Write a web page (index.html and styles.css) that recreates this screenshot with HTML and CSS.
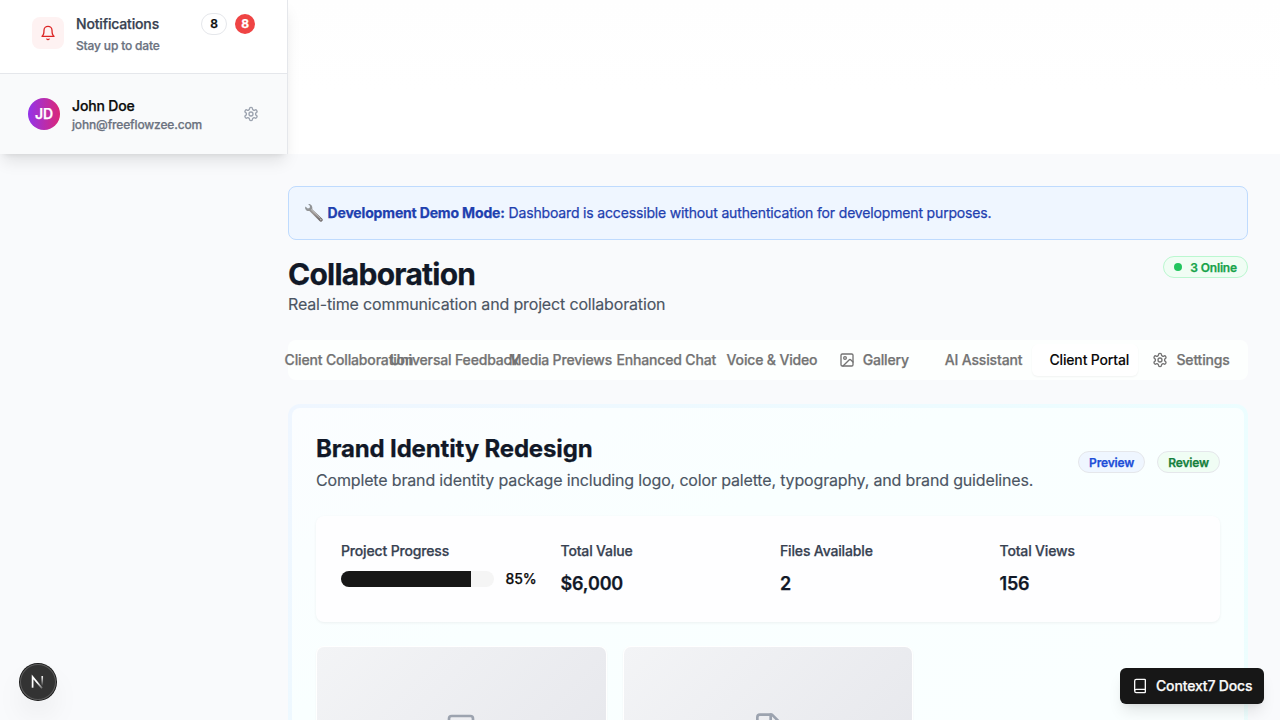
FILE: index.html
```html
<!DOCTYPE html>
<html lang="en">
<head>
<meta charset="utf-8">
<title>Collaboration</title>
<link rel="stylesheet" href="styles.css">
</head>
<body>
<div class="top">
  <aside class="sidebar">
    <div class="notice">
      <div class="bell"><svg class="i16" viewBox="0 0 24 24"><path d="M6 8a6 6 0 0 1 12 0c0 7 3 9 3 9H3s3-2 3-9"/><path d="M10.3 21a1.94 1.94 0 0 0 3.4 0"/></svg></div>
      <div class="notice-text">
        <div class="notice-title">Notifications</div>
        <div class="sub">Stay up to date</div>
      </div>
      <span class="badge count">8</span>
      <span class="alert">8</span>
    </div>
    <div class="user">
      <div class="avatar">JD</div>
      <div class="who">
        <div class="name">John Doe</div>
        <div class="mail">john@freeflowzee.com</div>
      </div>
      <svg class="i16 gear" viewBox="0 0 24 24"><path d="M12.22 2h-.44a2 2 0 0 0-2 2v.18a2 2 0 0 1-1 1.73l-.43.25a2 2 0 0 1-2 0l-.15-.08a2 2 0 0 0-2.73.73l-.22.38a2 2 0 0 0 .73 2.73l.15.1a2 2 0 0 1 1 1.72v.51a2 2 0 0 1-1 1.74l-.15.09a2 2 0 0 0-.73 2.73l.22.38a2 2 0 0 0 2.73.73l.15-.08a2 2 0 0 1 2 0l.43.25a2 2 0 0 1 1 1.73V20a2 2 0 0 0 2 2h.44a2 2 0 0 0 2-2v-.18a2 2 0 0 1 1-1.73l.43-.25a2 2 0 0 1 2 0l.15.08a2 2 0 0 0 2.73-.73l.22-.39a2 2 0 0 0-.73-2.73l-.15-.08a2 2 0 0 1-1-1.74v-.5a2 2 0 0 1 1-1.74l.15-.09a2 2 0 0 0 .73-2.73l-.22-.38a2 2 0 0 0-2.73-.73l-.15.08a2 2 0 0 1-2 0l-.43-.25a2 2 0 0 1-1-1.73V4a2 2 0 0 0-2-2z"/><circle cx="12" cy="12" r="3"/></svg>
    </div>
  </aside>
</div>
<main class="main">
  <div class="banner">
    <svg class="wrench" viewBox="0 0 20 20"><defs><linearGradient id="metal" x1="0" y1="0" x2="1" y2="1"><stop offset="0" stop-color="#8b959b"/><stop offset=".5" stop-color="#9a9492"/><stop offset="1" stop-color="#5e5859"/></linearGradient></defs><path fill="url(#metal)" d="M4.1 1.1 6 3.1 5.6 5 3.8 5.5 1.4 3.4C.4 5.7 2.3 8.500 5.400 8L15.800 18.300C17.400 19.400 19.500 17.500 18.500 15.900L8.300 6.200C8.900 3.300 6.900.5 4.100 1.100Z"/><path d="M7 6.400 16.500 15.700" stroke="#c9c9c9" stroke-width=".9"/><circle cx="16.900" cy="16.800" r=".7" fill="#ddd"/></svg>
    <p><strong>Development Demo Mode:</strong> Dashboard is accessible without authentication for development purposes.</p>
  </div>
  <header class="head">
    <div>
      <h1>Collaboration</h1>
      <p>Real-time communication and project collaboration</p>
    </div>
    <span class="badge online"><i></i>3 Online</span>
  </header>
  <nav class="tabs">
    <div class="tab"><i></i><span>Client Collaboration</span></div>
    <div class="tab"><i></i><span>Universal Feedback</span></div>
    <div class="tab"><i></i><span>Media Previews</span></div>
    <div class="tab"><i></i><span>Enhanced Chat</span></div>
    <div class="tab"><i></i><span>Voice &amp; Video</span></div>
    <div class="tab"><svg class="i16" viewBox="0 0 24 24"><rect x="3" y="3" width="18" height="18" rx="2"/><circle cx="9" cy="9" r="2"/><path d="m21 15-3.086-3.086a2 2 0 0 0-2.828 0L6 21"/></svg><span>Gallery</span></div>
    <div class="tab"><i></i><span>AI Assistant</span></div>
    <div class="tab active"><i></i><span>Client Portal</span></div>
    <div class="tab"><svg class="i16" viewBox="0 0 24 24"><path d="M12.22 2h-.44a2 2 0 0 0-2 2v.18a2 2 0 0 1-1 1.73l-.43.25a2 2 0 0 1-2 0l-.15-.08a2 2 0 0 0-2.73.73l-.22.38a2 2 0 0 0 .73 2.73l.15.1a2 2 0 0 1 1 1.72v.51a2 2 0 0 1-1 1.74l-.15.09a2 2 0 0 0-.73 2.73l.22.38a2 2 0 0 0 2.73.73l.15-.08a2 2 0 0 1 2 0l.43.25a2 2 0 0 1 1 1.73V20a2 2 0 0 0 2 2h.44a2 2 0 0 0 2-2v-.18a2 2 0 0 1 1-1.73l.43-.25a2 2 0 0 1 2 0l.15.08a2 2 0 0 0 2.73-.73l.22-.39a2 2 0 0 0-.73-2.73l-.15-.08a2 2 0 0 1-1-1.74v-.5a2 2 0 0 1 1-1.74l.15-.09a2 2 0 0 0 .73-2.73l-.22-.38a2 2 0 0 0-2.73-.73l-.15.08a2 2 0 0 1-2 0l-.43-.25a2 2 0 0 1-1-1.73V4a2 2 0 0 0-2-2z"/><circle cx="12" cy="12" r="3"/></svg><span>Settings</span></div>
  </nav>
  <div class="frame">
    <section class="project">
      <div class="project-head">
        <div>
          <h2>Brand Identity Redesign</h2>
          <p>Complete brand identity package including logo, color palette, typography, and brand guidelines.</p>
        </div>
        <div class="badges"><span class="badge blue">Preview</span><span class="badge green">Review</span></div>
      </div>
      <div class="stats">
        <div><div class="label">Project Progress</div><div class="progress"><div class="bar"><div class="fill" style="width:85%"></div></div><span>85%</span></div></div>
        <div><div class="label">Total Value</div><div class="value">$6,000</div></div>
        <div><div class="label">Files Available</div><div class="value">2</div></div>
        <div><div class="label">Total Views</div><div class="value">156</div></div>
      </div>
      <div class="files">
        <div class="file"><div class="thumb"><svg class="i32" viewBox="0 0 24 24"><rect x="3" y="3" width="18" height="18" rx="2"/><circle cx="9" cy="9" r="2"/><path d="m21 15-3.086-3.086a2 2 0 0 0-2.828 0L6 21"/></svg></div></div>
        <div class="file"><div class="thumb"><svg class="i32" viewBox="0 0 24 24"><path d="M15 2H6a2 2 0 0 0-2 2v16a2 2 0 0 0 2 2h12a2 2 0 0 0 2-2V7Z"/><path d="M14 2v4a2 2 0 0 0 2 2h4"/><path d="M10 9H8M16 13H8M16 17H8"/></svg></div></div>
      </div>
    </section>
  </div>
</main>
<div class="next"><svg viewBox="0 0 40 40"><defs><linearGradient id="fade" x1="0" y1="0" x2="0" y2="1"><stop offset="0" stop-color="#fff"/><stop offset="1" stop-color="#fff" stop-opacity="0"/></linearGradient><linearGradient id="diag" gradientUnits="userSpaceOnUse" x1="20" y1="20" x2="27" y2="29"><stop offset="0" stop-color="#fff"/><stop offset="1" stop-color="#fff" stop-opacity="0"/></linearGradient></defs><path d="M14 26.500V14.300L24.500 27" stroke="url(#diag)" stroke-width="1.900" fill="none"/><rect x="23.800" y="13.400" width="1.800" height="11" fill="url(#fade)"/></svg></div>
<button class="docs"><svg class="i16" viewBox="0 0 24 24"><path d="M4 19.500v-15A2.500 2.500 0 0 1 6.500 2H19a1 1 0 0 1 1 1v18a1 1 0 0 1-1 1H6.500a1 1 0 0 1 0-5H20"/></svg>Context7 Docs</button>
</body>
</html>
```
FILE: styles.css
```css
* { box-sizing: border-box; }
body { margin: 0; height: 720px; overflow: hidden; background: #f9fafc; color: #0a0a0a; font: 14px/20px Inter, sans-serif; letter-spacing: -.16px; -webkit-text-stroke: .25px currentColor; }
h1, h2, p { margin: 0; }
svg { flex: none; }
.i16, .i32 { width: 16px; height: 16px; fill: none; stroke: currentColor; stroke-width: 2; stroke-linecap: round; stroke-linejoin: round; }
.i32 { width: 32px; height: 32px; }

.top { height: 154px; background: linear-gradient(#fefefe, #fff 60%); }
.sidebar { width: 288px; height: 154px; background: #fff; border-right: 1px solid #e5e7eb; box-shadow: 0 10px 15px -3px #0000001a, 0 4px 6px -4px #0000001a; }
.notice { display: flex; height: 73px; padding: 14px 32px 0; align-items: flex-start; }
.bell { display: flex; width: 32px; height: 32px; margin: 3px 12px 0 0; border-radius: 8px; background: #fef2f2; color: #dc2626; align-items: center; justify-content: center; }
.notice-text { flex: 1; }
.notice-title { font-weight: 500; color: #374151; }
.sub { margin-top: 4px; font-size: 12px; line-height: 16px; font-weight: 500; color: #6b7280; }
.badge { display: inline-flex; height: 22px; padding: 0 10px; align-items: center; border: 1px solid #e5e7eb; border-radius: 11px; font-size: 12px; line-height: 16px; font-weight: 600; white-space: nowrap; }
.count { width: 26px; padding: 0; margin: -1px 8px 0 0; justify-content: center; }
.alert { width: 20px; height: 20px; border-radius: 10px; background: #ef4444; color: #fff; font-size: 12px; font-weight: 700; text-align: center; }
.user { display: flex; height: 81px; padding: 0 28px; align-items: center; border-top: 1px solid #e5e7eb; background: #f9fafb; }
.avatar { width: 32px; height: 32px; margin-right: 12px; border-radius: 50%; background: linear-gradient(90deg, #9333ea, #db2777); color: #fff; line-height: 32px; font-weight: 600; text-align: center; }
.who { flex: 1; }
.name { font-weight: 500; line-height: 20px; }
.mail { font-size: 12px; line-height: 18px; margin-bottom: -2px; font-weight: 500; color: #6b7280; }
.gear { color: #9ca3af; }

.main { height: 566px; overflow: hidden; padding: 32px 32px 0 284px; }
.main > * { margin-left: 4px; }
.banner { display: flex; height: 54px; padding: 0 15px; gap: 3.5px; align-items: center; border: 1px solid #bfdbfe; border-radius: 8px; background: #eff6ff; color: #1e40af; }
.wrench { width: 20px; height: 20px; fill: none; }
.banner strong { font-weight: 700; }
.head { display: flex; margin-top: 16px; justify-content: space-between; align-items: flex-start; }
h1 { font-size: 30px; line-height: 36px; font-weight: 700; letter-spacing: -.75px; color: #111827; }
.head p, .project-head p { font-size: 16px; line-height: 24px; color: #4b5563; -webkit-text-stroke-width: .15px; }
.online { gap: 8px; border-color: #bbf7d0; background: #f0fdf4; color: #16a34a; line-height: 18px; padding-top: 1px; }
.online i { width: 8px; height: 8px; margin-top: -1px; border-radius: 50%; background: #22c55e; }
.tabs { display: grid; grid-template-columns: repeat(9, minmax(0, 1fr)); height: 40px; margin-top: 24px; padding: 4px; border-radius: 8px; background: #fdfffe; color: #737373; font-weight: 500; }
.tab { display: flex; gap: 8px; align-items: center; justify-content: center; white-space: nowrap; border-radius: 6px; }
.active { background: #fff; color: #0a0a0a; box-shadow: 0 1px 2px #0000000d; -webkit-text-stroke-width: .1px; }
.frame { margin-top: 24px; padding: 4px; border-radius: 12px; background: linear-gradient(135deg, #eff6ff, #ecfeff 65%, #f0fdfa 120%); }
.project { height: 600px; padding: 24px; border-radius: 8px; background: linear-gradient(155deg, #fbfdff, #f9ffff 30%, #fbffff); }
.project-head { display: flex; height: 60px; margin-bottom: 24px; justify-content: space-between; align-items: center; }
h2 { margin-bottom: 2px; font-size: 24px; line-height: 34px; font-weight: 700; color: #111827; }
.badges { display: flex; gap: 12px; }
.blue, .green { padding-top: 1px; }
.blue { background: #eff6ff; color: #1d4ed8; }
.green { background: #f0fdf4; color: #15803d; }
.stats { display: grid; grid-template-columns: repeat(4, 1fr); gap: 24px; height: 106px; padding: 25px; border-radius: 8px; background: #fefeff; box-shadow: 0 1px 3px #0000000f; }
.label { font-weight: 500; color: #374151; }
.progress { display: flex; margin-top: 8px; gap: 12px; align-items: center; font-weight: 500; }
.bar { flex: 1; height: 16px; border-radius: 8px; background: #f5f5f5; overflow: hidden; }
.fill { height: 100%; background: #171717; }
.value { margin-top: 9px; font-size: 18px; line-height: 28px; font-weight: 600; color: #111827; }
.files { display: grid; grid-template-columns: repeat(3, 1fr); gap: 16px; margin-top: 24px; }
.file { padding: 1px; border-radius: 8px; background: #fff; box-shadow: 0 1px 2px #0000000d; }
.thumb { display: flex; height: 162px; align-items: center; justify-content: center; border-radius: 7px; background: linear-gradient(135deg, #f3f4f6, #e5e6eb); color: #9ca3af; }

.top { position: relative; }
.next { position: absolute; left: 20px; top: 664px; width: 36px; height: 36px; border-radius: 50%; background: #333; box-shadow: inset 0 0 0 1px #5c5c5c, 0 0 0 1px #171717, 0 16px 32px -8px #0000002e; }
.next svg { display: block; width: 36px; height: 36px; }
.docs { position: absolute; right: 16px; bottom: 16px; display: flex; width: 144px; height: 36px; padding: 0 12px; gap: 8px; align-items: center; border: 0; border-radius: 6px; background: #171717; color: #fafafa; font: 500 14px/20px Inter, sans-serif; letter-spacing: -.16px; white-space: nowrap; box-shadow: 0 10px 15px -3px #0000001a, 0 4px 6px -4px #0000001a; }
```
